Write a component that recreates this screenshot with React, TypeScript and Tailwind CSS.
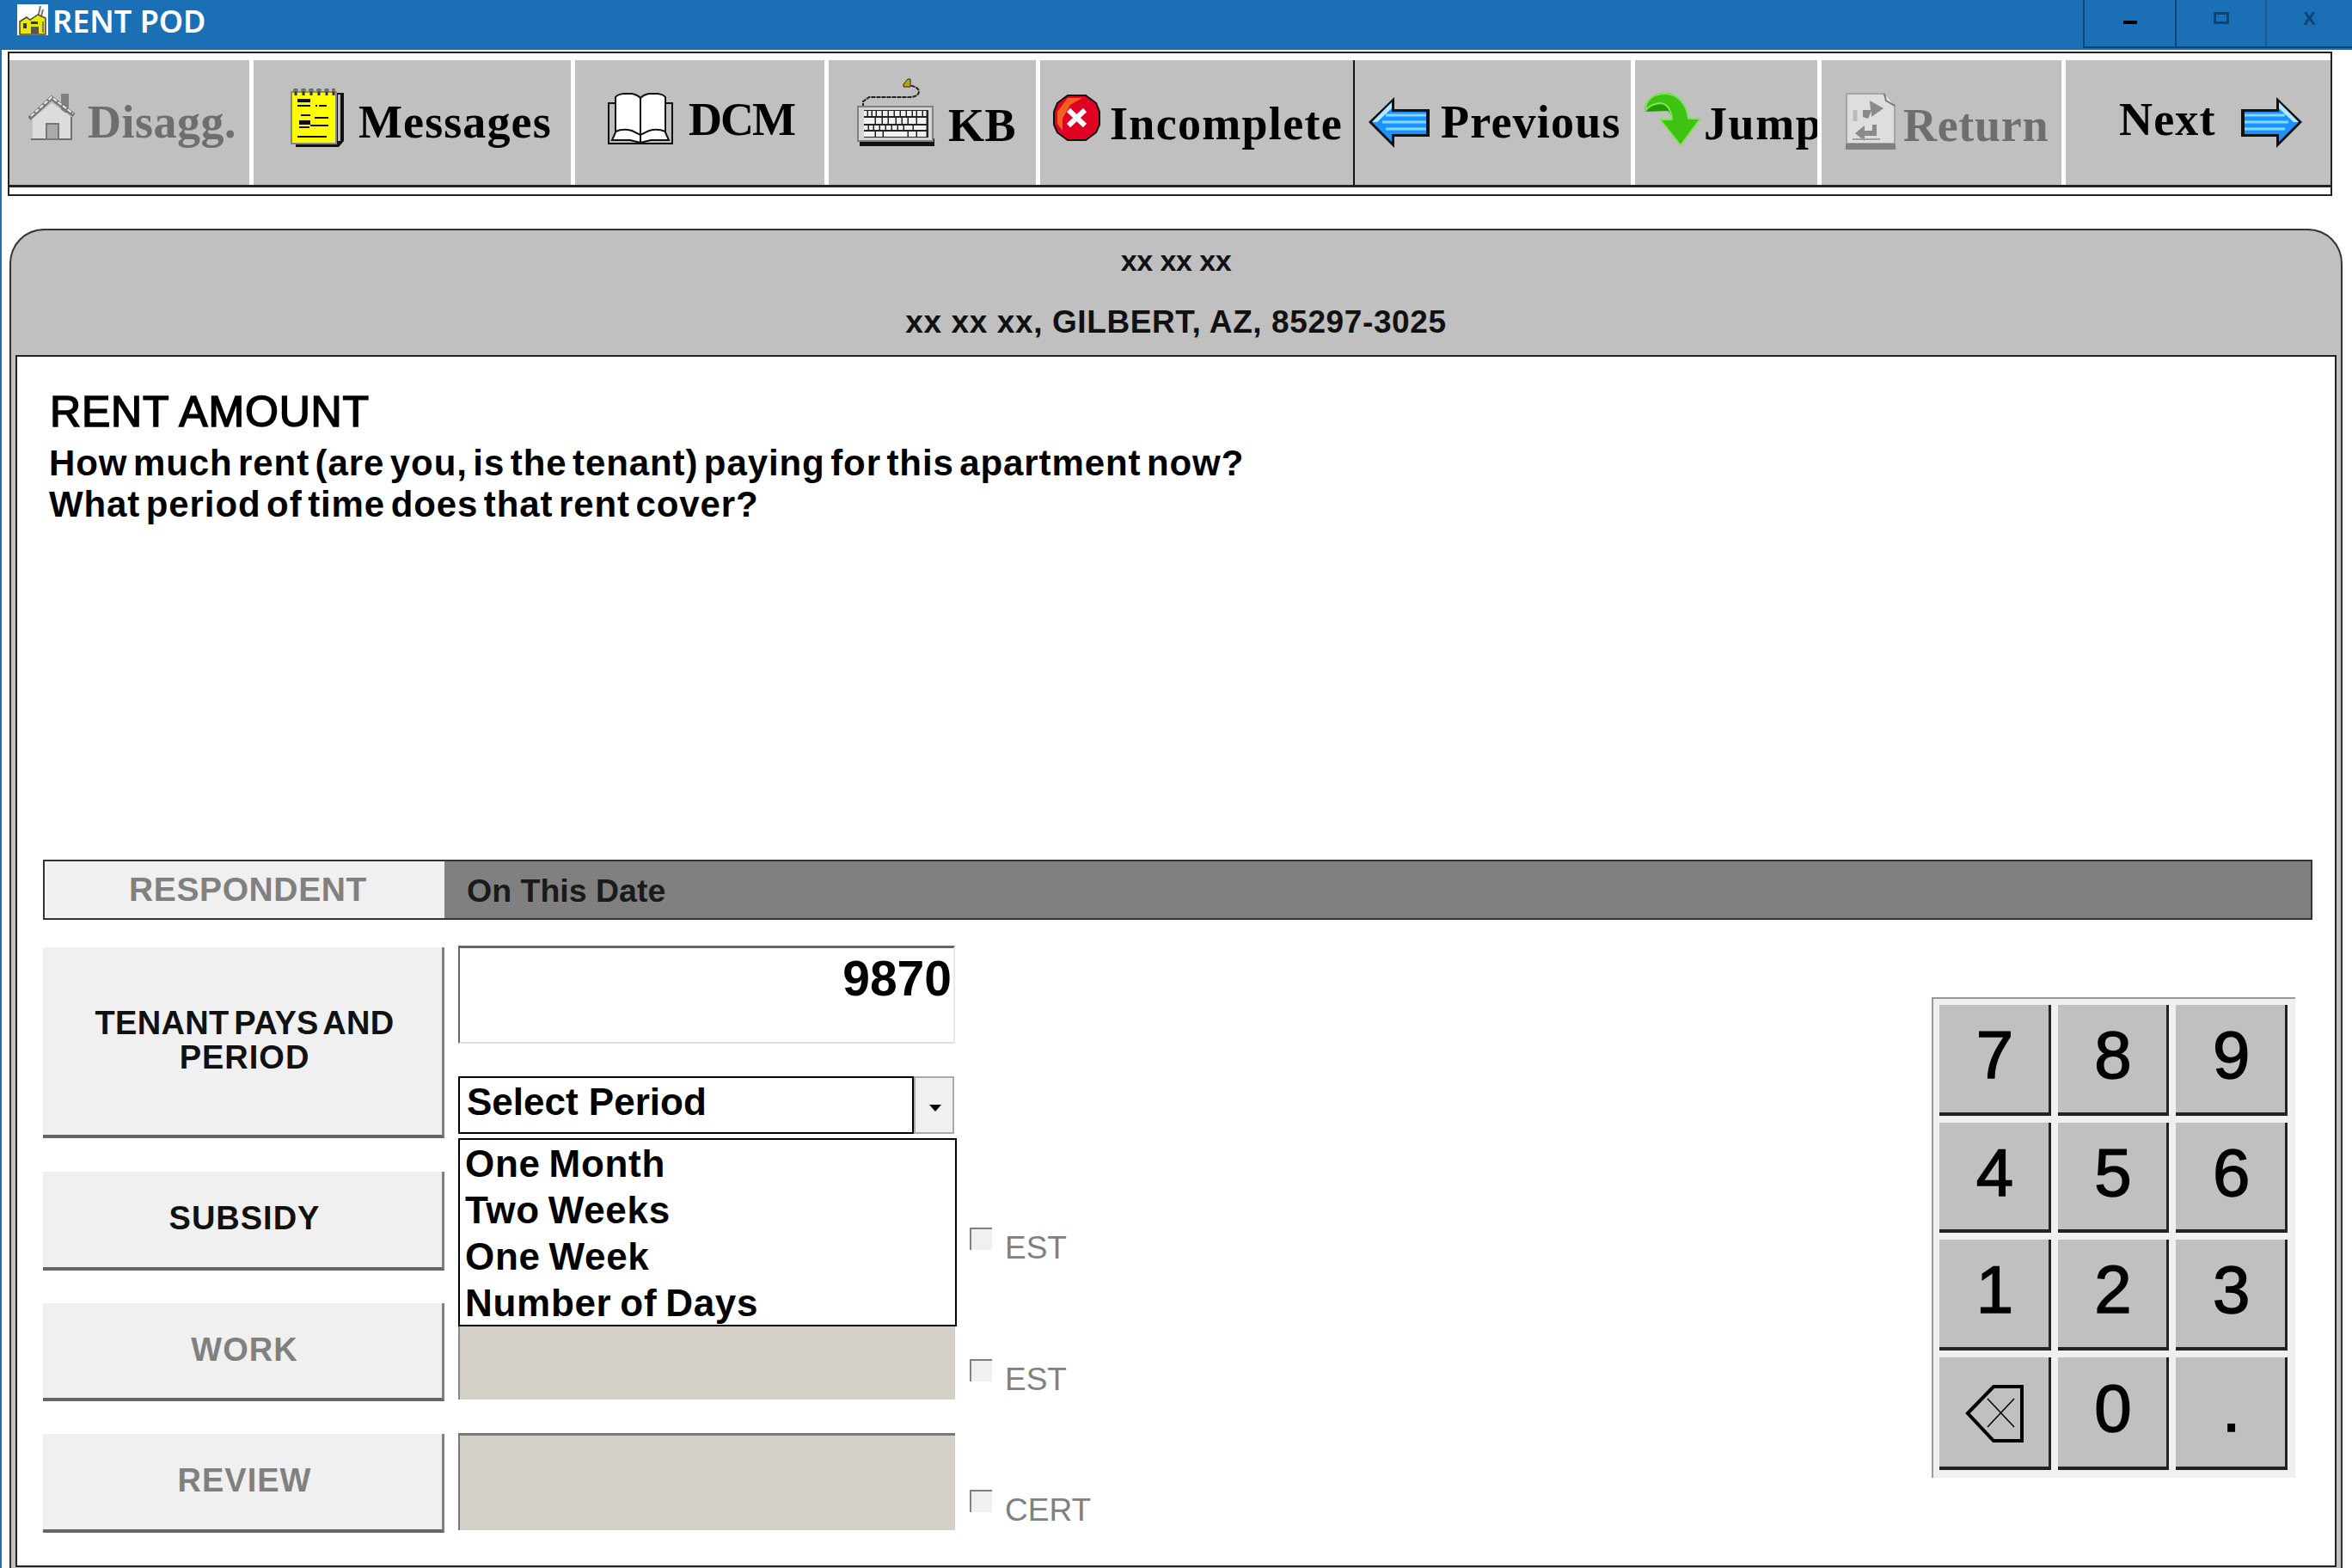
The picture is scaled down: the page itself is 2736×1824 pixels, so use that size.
import type { ReactNode } from 'react';

function AppIcon() {
  return (
    <svg width="36" height="36" viewBox="0 0 36 36">
      <rect width="36" height="36" fill="#fff" />
      <path d="M27 2 L24 16 M30 6 L27 18" stroke="#777" strokeWidth="2" />
      <path d="M3 20 L11 15 L15 18 L24 12 L33 16 V35 H3 Z" fill="#e8e800" stroke="#444" strokeWidth="1.5" />
      <rect x="7" y="22" width="4" height="6" fill="#333" />
      <rect x="16" y="20" width="8" height="3" fill="#333" />
      <rect x="16" y="26" width="9" height="8" fill="#555" />
      <rect x="29" y="20" width="2" height="13" fill="#777" />
    </svg>
  );
}

function HouseIcon() {
  return (
    <svg width="55" height="56" viewBox="0 0 55 56">
      <rect x="38" y="1" width="9" height="22" fill="#808080" />
      <path d="M5 30 L27 12 L50 28 V54 H5 Z" fill="#dcdcdc" />
      <path d="M50 28 V54 H3" fill="none" stroke="#6e6e6e" strokeWidth="2" />
      <path d="M1 30 L27 6 L53 26" fill="none" stroke="#777" strokeWidth="5" />
      <path d="M3 27 L27 5 L52 24" fill="none" stroke="#eee" strokeWidth="2" strokeDasharray="5 2" />
      <rect x="21" y="36" width="14" height="18" fill="#aaa" stroke="#777" strokeWidth="2" />
    </svg>
  );
}

function NotepadIcon() {
  return (
    <svg width="63" height="70" viewBox="0 0 63 70">
      <path d="M54 6 H62 V62 L56 69 H6 V64 H54 Z" fill="#111" />
      <path d="M55 8 H58 V62 H55 Z" fill="#bbb" />
      <rect x="1" y="5" width="52" height="60" fill="#ffff00" stroke="#888" strokeWidth="2" />
      <path d="M6 1 V9 M15 1 V9 M24 1 V9 M33 1 V9 M42 1 V9 M50 1 V9" stroke="#333" strokeWidth="3" />
      <path d="M3 3 H52" stroke="#777" strokeWidth="3" strokeDasharray="6 3" />
      <g fill="#111">
        <rect x="8" y="13" width="15" height="4" />
        <rect x="8" y="20" width="15" height="2" />
        <rect x="29" y="20" width="2" height="2" />
        <rect x="33" y="20" width="9" height="2" />
        <rect x="12" y="31" width="11" height="2" />
        <rect x="28" y="34" width="16" height="2" />
        <rect x="10" y="38" width="13" height="5" />
        <rect x="23" y="43" width="21" height="2" />
        <rect x="10" y="45" width="12" height="2" />
        <rect x="8" y="56" width="34" height="2" />
      </g>
    </svg>
  );
}

function BookIcon() {
  return (
    <svg width="76" height="61" viewBox="0 0 76 61">
      <path d="M8 12 H1 V59 H75 V12 H68" fill="#c0c0c0" stroke="#111" strokeWidth="2" />
      <path d="M9 5 Q11 2 18 1 H28 Q34 2 38 6 Q42 2 48 1 H58 Q65 2 67 5 V46 L71 55 H50 L38 58 L26 55 H5 L9 46 Z" fill="#fff" stroke="#111" strokeWidth="2" />
      <path d="M38 6 V58" stroke="#111" strokeWidth="2" />
      <path d="M9 45 Q18 41 28 44 L38 49 L48 44 Q58 41 67 45" fill="none" stroke="#111" strokeWidth="2" />
    </svg>
  );
}

const keyRows = [
  [8, 13, 18, 23, 30, 37, 44, 51, 58, 65, 70, 77],
  [8, 22, 30, 37, 46, 53, 60, 70],
  [8, 14, 20, 27, 34, 41, 48, 55, 66],
  [8, 22, 31, 60, 70],
];

function KeyboardIcon() {
  return (
    <svg width="90" height="79" viewBox="0 0 90 79">
      <path d="M7 34 V27 L14 22 H60 Q72 22 72 15 Q71 10 60 8" fill="none" stroke="#222" strokeWidth="2" strokeDasharray="5 1" />
      <path d="M54 7 L59 1 H62 V10 H54 Z" fill="#b8a800" stroke="#222" />
      <rect x="3" y="70" width="87" height="9" fill="#111" />
      <rect x="1" y="33" width="87" height="40" fill="#d4d4d4" stroke="#808080" strokeWidth="2" />
      <rect x="8" y="37" width="75" height="32" fill="#222" />
      {keyRows.map((row, r) =>
        row.map((x, i) => (
          <rect
            key={`${r}-${i}`}
            x={x}
            y={[38, 46, 55, 62][r]}
            width={(i < row.length - 1 ? row[i + 1] : 82) - x - 1.5}
            height={[6, 7, 5, 6][r]}
            fill="#f2f0f0"
          />
        )),
      )}
    </svg>
  );
}

function ErrorIcon() {
  return (
    <svg width="55" height="54" viewBox="0 0 55 54">
      <path d="M17 1 H38 L50 10 L54 20 V35 L50 44 L38 53 H17 L5 44 L1 35 V20 L5 10 Z" fill="#e00024" stroke="#111" strokeWidth="2" />
      <path d="M17 4 H34 L20 12 L11 28 V42 L5 34 V20 Z" fill="#f06020" />
      <path d="M18 18 L37 36 M37 18 L18 36" stroke="#fff" strokeWidth="6" />
    </svg>
  );
}

function BlueArrow({ className }: { className?: string }) {
  return (
    <svg width="71" height="59" viewBox="0 0 71 59" className={className}>
      <path d="M30 0 L0 29 L30 59 V46 H71 V14 H30 Z" fill="#111" />
      <path d="M27 6 L4 29 L27 52 V43 H67 V17 H27 Z" fill="#1e90ff" />
      <path d="M27 6 L4 29 L10 29 L27 13 Z" fill="#b5e8ff" />
      <path d="M20 21 H67 M16 29 H67 M20 37 H67" stroke="#7fdcff" strokeWidth="3" />
    </svg>
  );
}

function JumpIcon() {
  return (
    <svg width="67" height="63" viewBox="0 0 67 63">
      <path d="M1 23 C1 8 12 1 25 1 C40 1 50 14 52 31 H66 L43 62 L19 32 H33 C32 27 31 24 28 22 Z" fill="#1f9c00" />
      <path d="M2 22 C2 8 12 2 25 2 C40 2 50 14 52 31 H66 L43 62 L19 32 H33 C32 22 28 14 20 13 C12 13 5 17 2 22 Z" fill="#3ec410" stroke="#86e060" strokeWidth="2" strokeLinejoin="round" />
    </svg>
  );
}

function ReturnIcon() {
  return (
    <svg width="58" height="66" viewBox="0 0 58 66">
      <path d="M1 1 H44 L57 15 V59 H1 Z" fill="#dedede" stroke="#a4a4a4" strokeWidth="2" />
      <path d="M45 1 L47 9 L57 15" fill="#eee" stroke="#777" strokeWidth="2" />
      <rect y="59" width="58" height="7" fill="#808080" />
      <path d="M20 28 V20 H29 L28 9 L44 18 L30 28 V21 L26 30 Z" fill="#8a8a8a" />
      <path d="M31 37 V44 H22 V38 L11 47 L22 56 V50 H36 V37 Z" fill="#8a8a8a" />
      <path d="M11 20 V33" stroke="#bbb" strokeWidth="5" />
      <path d="M8 54 H40" stroke="#a0a0a0" strokeWidth="2" />
    </svg>
  );
}

function BackspaceIcon() {
  return (
    <svg width="68" height="69" viewBox="0 0 68 69" className="mt-[12px]">
      <path d="M3 34 L33 3 H66 V66 H33 Z" fill="none" stroke="#000" strokeWidth="4" />
      <path d="M26 17 L57 50 M57 17 L26 50" stroke="#000" strokeWidth="1.5" />
    </svg>
  );
}

interface ToolItem {
  label: string;
  width: string;
  pad: string;
  icon?: ReactNode;
  iconTop?: string;
  labelClass: string;
  muted?: boolean;
  border: string;
  trailing?: ReactNode;
}

const toolItems: ToolItem[] = [
  { label: 'Disagg.', width: 'w-[279px]', pad: 'pl-[22px]', icon: <HouseIcon />, iconTop: 'mt-[38px]', labelClass: 'ml-[14px] mt-[45px] tracking-[0.5px]', muted: true, border: '' },
  { label: 'Messages', width: 'w-[374px]', pad: 'pl-[43px]', icon: <NotepadIcon />, iconTop: 'mt-[32px]', labelClass: 'ml-[16px] mt-[45px] tracking-[1.1px]', border: 'border-l-[5px] border-white' },
  { label: 'DCM', width: 'w-[295px]', pad: 'pl-[38px]', icon: <BookIcon />, iconTop: 'mt-[38px]', labelClass: 'ml-[18px] mt-[42px] tracking-[-2px]', border: 'border-l-[5px] border-white' },
  { label: 'KB', width: 'w-[246px]', pad: 'pl-[33px]', icon: <KeyboardIcon />, iconTop: 'mt-[21px]', labelClass: 'ml-[16px] mt-[49px] tracking-[0.5px]', border: 'border-l-[5px] border-white' },
  { label: 'Incomplete', width: 'w-[369px]', pad: 'pl-[15px]', icon: <ErrorIcon />, iconTop: 'mt-[40px]', labelClass: 'ml-[11px] mt-[47px] tracking-[1.3px]', border: 'border-l-[5px] border-white' },
  { label: 'Previous', width: 'w-[323px]', pad: 'pl-[16px]', icon: <BlueArrow />, iconTop: 'mt-[43px]', labelClass: 'ml-[13px] mt-[45px] tracking-[1.2px]', border: 'border-l-[2px] border-[#111]' },
  { label: 'Jump', width: 'w-[217px]', pad: 'pl-[10px]', icon: <JumpIcon />, iconTop: 'mt-[37px]', labelClass: 'ml-[3px] mt-[47px] tracking-[1.6px]', border: 'border-l-[5px] border-white' },
  { label: 'Return', width: 'w-[284px]', pad: 'pl-[28px]', icon: <ReturnIcon />, iconTop: 'mt-[38px]', labelClass: 'ml-[9px] mt-[49px] tracking-[0.7px]', muted: true, border: 'border-l-[5px] border-white' },
  { label: 'Next', width: 'w-[313px]', pad: 'pl-[62px]', labelClass: 'mt-[42px] tracking-[1.2px]', border: 'border-l-[5px] border-white', trailing: <BlueArrow className="ml-[29px] mt-[43px] -scale-x-100" /> },
];

function Toolbar() {
  return (
    <div className="ml-[7px] mt-[2px] w-[2704px] h-[168px] border-2 border-[#222] bg-white pt-[8px] pb-[8px]">
      <div className="flex h-[148px] border-b-[3px] border-[#222] bg-[#c0c0c0]">
        {toolItems.map((item) => (
          <div key={item.label} className={`flex shrink-0 items-start overflow-hidden ${item.width} ${item.pad} ${item.border}`}>
            {item.icon && <div className={`shrink-0 ${item.iconTop}`}>{item.icon}</div>}
            <span className={`shrink-0 font-['Liberation_Serif',serif] font-bold text-[54px] leading-[54px] ${item.labelClass} ${item.muted ? 'text-[#6e6e6e]' : 'text-black'}`}>
              {item.label}
            </span>
            {item.trailing}
          </div>
        ))}
      </div>
    </div>
  );
}

function TitleBar() {
  return (
    <div className="flex h-[58px] items-start bg-[#1a6fb5]">
      <div className="ml-[20px] mt-[5px]">
        <AppIcon />
      </div>
      <span className="ml-[5px] mt-[2px] font-['Noto_Sans',sans-serif] font-semibold text-[36px] leading-[46px] text-white">
        RENT POD
      </span>
      <div className="ml-auto flex h-[56px] border-b-2 border-[#0f4470]">
        <div className="flex w-[107px] justify-center border-l-2 border-[#0f4470] pt-[24px]">
          <div className="h-[4px] w-[16px] bg-black" />
        </div>
        <div className="flex w-[105px] justify-center border-l-2 border-[#0f4470] pt-[14px]">
          <div className="h-[14px] w-[18px] border-[3px] border-[#0f4470]" />
        </div>
        <div className="flex w-[101px] justify-center border-l-2 border-[#1a5a90] pt-[8px] text-[22px] leading-[28px] font-bold text-[#0f4470]">
          X
        </div>
      </div>
    </div>
  );
}

function SideButton({ label, muted, className }: { label: ReactNode; muted?: boolean; className: string }) {
  return (
    <div className={`flex w-[467px] shrink-0 items-center justify-center border-r-[3px] border-b-[4px] border-r-[#808080] border-b-[#666] bg-[#f0f0f0] pb-[3px] pl-[5px] text-center font-bold text-[38px] leading-[40px] tracking-[1px] ${muted ? 'text-[#808080]' : 'text-[#111]'} ${className}`}>
      <span>{label}</span>
    </div>
  );
}

function CheckLabel({ label }: { label: string }) {
  return (
    <div className="ml-px flex shrink-0 items-start">
      <div className="mt-[65px] h-[26px] w-[26px] border-t-2 border-l-2 border-[#808080] bg-[#f0f0f0]" />
      <span className="ml-[15px] mt-[70px] text-[37px] leading-[37px] text-[#808080]">{label}</span>
    </div>
  );
}

function Keypad() {
  const keys: ReactNode[] = ['7', '8', '9', '4', '5', '6', '1', '2', '3', <BackspaceIcon key="back" />, '0', '.'];
  return (
    <div className="mt-[58px] grid h-[559px] w-[423px] shrink-0 grid-cols-3 gap-[8px] border-t-2 border-l-2 border-[#999] bg-[#f0f0f0] pt-[7px] pl-[7px] pr-[9px] pb-[9px]">
      {keys.map((key, i) => (
        <div key={i} className="flex items-center justify-center border-r-[3px] border-b-[4px] border-[#222] bg-[#c0c0c0] pb-[8px] pl-[2px] text-[78px] leading-[78px] text-black [-webkit-text-stroke:1.5px_black]">
          {key}
        </div>
      ))}
    </div>
  );
}

function Form() {
  return (
    <div className="mt-[32px] flex justify-between pr-[46px]">
      <div className="flex w-[1300px] flex-col gap-[39px]">
        <div className="flex h-[222px] gap-[16px]">
          <SideButton
            className="h-[222px]"
            label={
              <>
                <span className="tracking-[0.3px] [word-spacing:-5px]">TENANT PAYS AND</span>
                <br />
                PERIOD
              </>
            }
          />
          <div className="relative -mt-[2px] w-[578px] shrink-0">
            <div className="h-[114px] border-t-[3px] border-l-2 border-r-2 border-b-2 border-t-[#666] border-l-[#666] border-r-[#e8e8e8] border-b-[#ddd] pr-[2px] pt-[7px] text-right font-bold text-[57px] leading-[57px] text-black">
              9870
            </div>
            <div className="mt-[38px] flex h-[67px]">
              <div className="w-[530px] border-2 border-black pl-[8px] pt-[1px] font-bold text-[44px] leading-[54px] text-black">Select Period</div>
              <div className="flex w-[47px] items-center justify-center border-2 border-[#aaa] bg-[#f0f0f0] pl-[3px] pt-[6px]">
                <div className="border-x-[7px] border-t-[8px] border-x-transparent border-t-black" />
              </div>
            </div>
            <div className="absolute left-0 top-[224px] z-10 h-[219px] w-[580px] border-2 border-black bg-white pl-[6px] pt-px font-bold text-[44px] leading-[54px] tracking-[0.7px] text-black [word-spacing:-3px]">
              <div>One Month</div>
              <div>Two Weeks</div>
              <div>One Week</div>
              <div>Number of Days</div>
            </div>
          </div>
        </div>
        <div className="flex h-[114px] gap-[16px]">
          <SideButton className="h-[115px]" label="SUBSIDY" />
          <div className="w-[578px] shrink-0 bg-white" />
          <CheckLabel label="EST" />
        </div>
        <div className="flex h-[113px] gap-[16px]">
          <SideButton muted className="h-[114px]" label="WORK" />
          <div className="h-[112px] w-[578px] shrink-0 border-l-2 border-[#888] bg-[#d4d0c8]" />
          <CheckLabel label="EST" />
        </div>
        <div className="flex h-[115px] gap-[16px]">
          <SideButton muted className="h-[115px]" label="REVIEW" />
          <div className="-mt-[1px] h-[113px] w-[578px] shrink-0 border-t-[3px] border-l-2 border-[#777] bg-[#d4d0c8]" />
          <CheckLabel label="CERT" />
        </div>
      </div>
      <Keypad />
    </div>
  );
}

export default function App() {
  return (
    <div className="h-[1824px] w-[2736px] overflow-hidden border-l-2 border-[#1a6fb5] bg-white font-['Liberation_Sans',sans-serif]">
      <div className="-ml-[2px]">
        <TitleBar />
      </div>
      <Toolbar />
      <div className="ml-[9px] mt-[38px] h-[1558px] w-[2714px] rounded-t-[40px] border-x-2 border-t-2 border-[#333] bg-[#c0c0c0] px-[5px]">
        <div className="h-[145px] pt-[15px] text-center font-bold text-[#111]">
          <div className="text-[34px] leading-[40px] tracking-[-0.5px]">xx xx xx</div>
          <div className="mt-[30px] text-[37px] leading-[44px] tracking-[0.6px]">xx xx xx, GILBERT, AZ, 85297-3025</div>
        </div>
        <div className="h-[1410px] border-2 border-[#222] bg-white pl-[30px] pr-0">
          <div className="pl-[6px] pt-[40px]">
            <h1 className="ml-[2px] text-[50px] leading-[48px] tracking-[0.8px] text-black [-webkit-text-stroke:1.6px_black]">RENT AMOUNT</h1>
            <p className="ml-px mt-[12px] text-[42px] leading-[48px] font-bold tracking-[0.9px] text-black [word-spacing:-6px]">
              How much rent (are you, is the tenant) paying for this apartment now?
              <br />
              What period of time does that rent cover?
            </p>
          </div>
          <div className="mt-[389px] flex h-[70px] w-[2640px] border-2 border-[#333] bg-[#808080]">
            <div className="flex w-[465px] items-center justify-center bg-[#f0f0f0] pl-[8px] text-[39px] font-bold tracking-[0.6px] text-[#808080]">RESPONDENT</div>
            <div className="flex items-center pl-[26px] pt-[2px] text-[37.5px] font-bold text-[#1a1a1a]">On This Date</div>
          </div>
          <Form />
        </div>
      </div>
    </div>
  );
}
